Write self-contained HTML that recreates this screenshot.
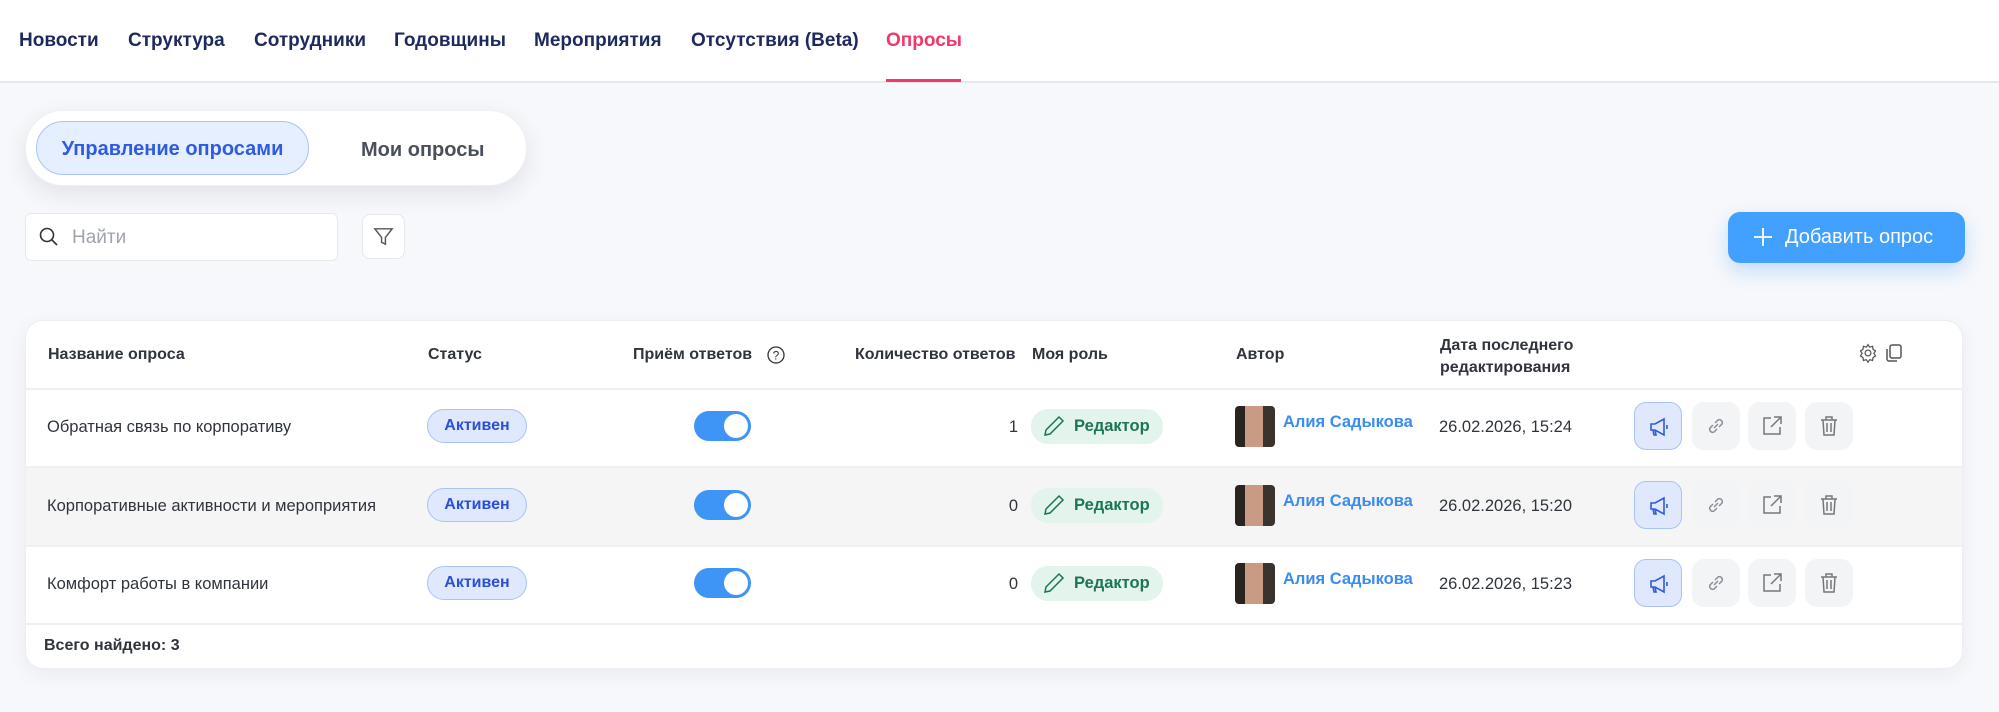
<!DOCTYPE html>
<html><head><meta charset="utf-8"><style>
*{box-sizing:border-box;margin:0;padding:0}
body{width:1999px;height:712px;background:#f7f8fb;font-family:"Liberation Sans",sans-serif;position:relative;overflow:hidden;color:#2b2f3a}
.a{position:absolute}
.hdr{left:0;top:0;width:1999px;height:83px;background:#fff;border-bottom:2px solid #e6e8ee}
.nav{top:30px;font-size:19px;font-weight:bold;color:#1c2a5e;white-space:nowrap}
.seg{left:25px;top:110px;width:502px;height:76px;background:#fff;border-radius:38px;box-shadow:0 8px 24px rgba(30,40,80,.10);border:1px solid #eef0f4}
.segon{left:36px;top:121px;width:273px;height:54px;border-radius:27px;background:#e6efff;border:1.5px solid #a8c4fb;color:#2f5be0;font-weight:bold;font-size:20px;text-align:center;line-height:55px}
.card{left:25px;top:320px;width:1938px;height:349px;background:#fff;border-radius:18px;box-shadow:0 6px 20px rgba(30,40,80,.06);border:1px solid #eceef2;overflow:hidden}
.th{font-size:16px;font-weight:bold;color:#30343c;white-space:nowrap}
.td{font-size:16.5px;color:#30343c;white-space:nowrap}
.row{left:0;width:1938px;border-top:2px solid #eef0f3}
.badge{width:100px;height:34px;border-radius:17px;background:#dfe8fd;border:1.5px solid #a9c2f7;color:#2c4fd6;font-weight:bold;font-size:16px;text-align:center;line-height:31px}
.tog{width:57px;height:30px;border-radius:15px;background:#3f95f6}
.tog:after{content:"";position:absolute;right:3px;top:3px;width:24px;height:24px;border-radius:12px;background:#fff}
.role{width:132px;height:35px;border-radius:17px;background:#e2f4ec;color:#1d7653;font-weight:bold;font-size:16.5px;line-height:35px;padding-left:43px}
.av{width:40px;height:41px;border-radius:4px;background:linear-gradient(90deg,#2a2420 0 25%,#c99b85 25% 70%,#3a332e 70%)}
.name{color:#3b8cf0;font-weight:bold;font-size:16.5px}
.btn{width:48px;height:48px;border-radius:12px;background:#f3f4f6}
.btn.on{background:#dfe8fd;border:1.5px solid #a9c2f7}
.btn svg{position:absolute;left:12px;top:12px}
</style></head><body>
<div class="a hdr"></div>
<div class="a nav" style="left:19px">Новости</div>
<div class="a nav" style="left:128px">Структура</div>
<div class="a nav" style="left:254px">Сотрудники</div>
<div class="a nav" style="left:394px">Годовщины</div>
<div class="a nav" style="left:534px">Мероприятия</div>
<div class="a nav" style="left:691px">Отсутствия (Beta)</div>
<div class="a nav" style="left:886px;color:#f0386b">Опросы</div>
<div class="a" style="left:886px;top:79px;width:75px;height:3px;background:#f0386b"></div>

<div class="a seg"></div>
<div class="a segon">Управление опросами</div>
<div class="a" style="left:361px;top:139px;font-size:20px;font-weight:bold;color:#4a4f5c">Мои опросы</div>

<div class="a" style="left:25px;top:213px;width:313px;height:48px;background:#fff;border:1px solid #e6e8ee;border-radius:6px"></div>
<svg class="a" style="left:38px;top:226px" width="22" height="22" viewBox="0 0 22 22" fill="none" stroke="#333" stroke-width="1.6"><circle cx="9" cy="9" r="6.5"/><path d="M14 14l5 5"/></svg>
<div class="a" style="left:72px;top:227px;font-size:19px;color:#a0a4ad">Найти</div>
<div class="a" style="left:362px;top:214px;width:43px;height:45px;background:#fff;border:1px solid #e6e8ee;border-radius:8px"></div>
<svg class="a" style="left:372px;top:225px" width="23" height="23" viewBox="0 0 24 24" fill="none" stroke="#555" stroke-width="1.5"><path d="M3 4h18l-7 9v7l-4-2v-5z"/></svg>

<div class="a" style="left:1728px;top:212px;width:237px;height:51px;background:#42a0ff;border-radius:12px;box-shadow:0 8px 20px rgba(66,160,255,.3)"></div>
<svg class="a" style="left:1752px;top:226px" width="22" height="22" viewBox="0 0 22 22" stroke="#fff" stroke-width="1.8"><path d="M11 2v18M2 11h18"/></svg>
<div class="a" style="left:1785px;top:226px;font-size:20px;color:#fff">Добавить опрос</div>

<div class="a card">
 <div class="a th" style="left:22px;top:25px">Название опроса</div>
 <div class="a th" style="left:402px;top:25px">Статус</div>
 <div class="a th" style="left:607px;top:25px">Приём ответов</div>
 <svg class="a" style="left:740px;top:24px" width="20" height="20" viewBox="0 0 20 20" fill="none" stroke="#333" stroke-width="1.3"><circle cx="10" cy="10" r="8"/><text x="10" y="14.5" font-size="12" text-anchor="middle" fill="#333" stroke="none" font-family="Liberation Sans">?</text></svg>
 <div class="a th" style="left:829px;top:25px">Количество ответов</div>
 <div class="a th" style="left:1006px;top:25px">Моя роль</div>
 <div class="a th" style="left:1210px;top:25px">Автор</div>
 <div class="a th" style="left:1414px;top:14px;line-height:22px">Дата последнего<br>редактирования</div>
 <svg class="a" style="left:1832px;top:22px" width="20" height="20" viewBox="0 0 24 24" fill="none" stroke="#555" stroke-width="1.5"><circle cx="12" cy="12" r="3.5"/><path d="M12 2l2 3 3.5-1 .5 3.5 3 2-2 3 2 3-3 2-.5 3.5-3.5-1-2 3-2-3-3.5 1-.5-3.5-3-2 2-3-2-3 3-2 .5-3.5 3.5 1z"/></svg>
 <svg class="a" style="left:1858px;top:22px" width="20" height="20" viewBox="0 0 20 20" fill="none" stroke="#555" stroke-width="1.5"><rect x="6" y="2" width="11" height="13" rx="2"/><path d="M3 6v10a2 2 0 002 2h8"/></svg>

 <div class="a row" style="top:67px;height:78px"></div>
 <div class="a row" style="top:145px;height:79px;background:#f5f5f6"></div>
 <div class="a row" style="top:224px;height:78px"></div>
 <div class="a row" style="top:302px;height:47px"></div>
 <div class="a" style="left:18px;top:316px;font-size:16px;font-weight:bold;color:#30343c">Всего найдено: 3</div>
</div>

<div id="rows"></div>
<script>
var data=[["Обратная связь по корпоративу","1","26.02.2026, 15:24",426],["Корпоративные активности и мероприятия","0","26.02.2026, 15:20",505],["Комфорт работы в компании","0","26.02.2026, 15:23",583]];
var h="";
data.forEach(function(d){var c=d[3];
h+='<div class="a td" style="left:47px;top:'+(c-8)+'px">'+d[0]+'</div>';
h+='<div class="a badge" style="left:427px;top:'+(c-17)+'px">Активен</div>';
h+='<div class="a tog" style="left:694px;top:'+(c-15)+'px"></div>';
h+='<div class="a td" style="left:1000px;width:18px;text-align:right;top:'+(c-8)+'px">'+d[1]+'</div>';
h+='<div class="a role" style="left:1031px;top:'+(c-17)+'px">Редактор</div>';
h+='<svg class="a" style="left:1042px;top:'+(c-12)+'px" width="24" height="24" viewBox="0 0 24 24" fill="none" stroke="#1d7653" stroke-width="1.5"><path d="M17 3l4 4L8 20l-5 1 1-5z"/></svg>';
h+='<div class="a av" style="left:1235px;top:'+(c-20)+'px"></div>';
h+='<div class="a name" style="left:1283px;top:'+(c-13)+'px">Алия Садыкова</div>';
h+='<div class="a td" style="left:1439px;top:'+(c-8)+'px">'+d[2]+'</div>';
h+='<div class="a btn on" style="left:1634px;top:'+(c-24)+'px"><svg width="24" height="24" viewBox="0 0 24 24" fill="none" stroke="#2f5be0" stroke-width="1.6"><path d="M4 9h4l9-5v16l-9-5H4z M6 15l1 5h2l-1-5"/><path d="M20 10v4"/></svg></div>';
h+='<div class="a btn" style="left:1692px;top:'+(c-24)+'px"><svg width="24" height="24" viewBox="0 0 24 24" fill="none" stroke="#8a8f99" stroke-width="1.5"><path d="M10 14l4-4M9 11l-3 3a3 3 0 004 4l3-3M15 13l3-3a3 3 0 00-4-4l-3 3"/></svg></div>';
h+='<div class="a btn" style="left:1748px;top:'+(c-24)+'px"><svg width="24" height="24" viewBox="0 0 24 24" fill="none" stroke="#777" stroke-width="1.5"><path d="M11 4H4v16h16v-7M14 3h7v7M21 3L11 13"/></svg></div>';
h+='<div class="a btn" style="left:1805px;top:'+(c-24)+'px"><svg width="24" height="24" viewBox="0 0 24 24" fill="none" stroke="#777" stroke-width="1.5"><path d="M4 6h16M9 6V3h6v3M6 6l1 15h10l1-15M10 9v9M14 9v9"/></svg></div>';
});
document.getElementById("rows").innerHTML=h;
</script>
</body></html>
